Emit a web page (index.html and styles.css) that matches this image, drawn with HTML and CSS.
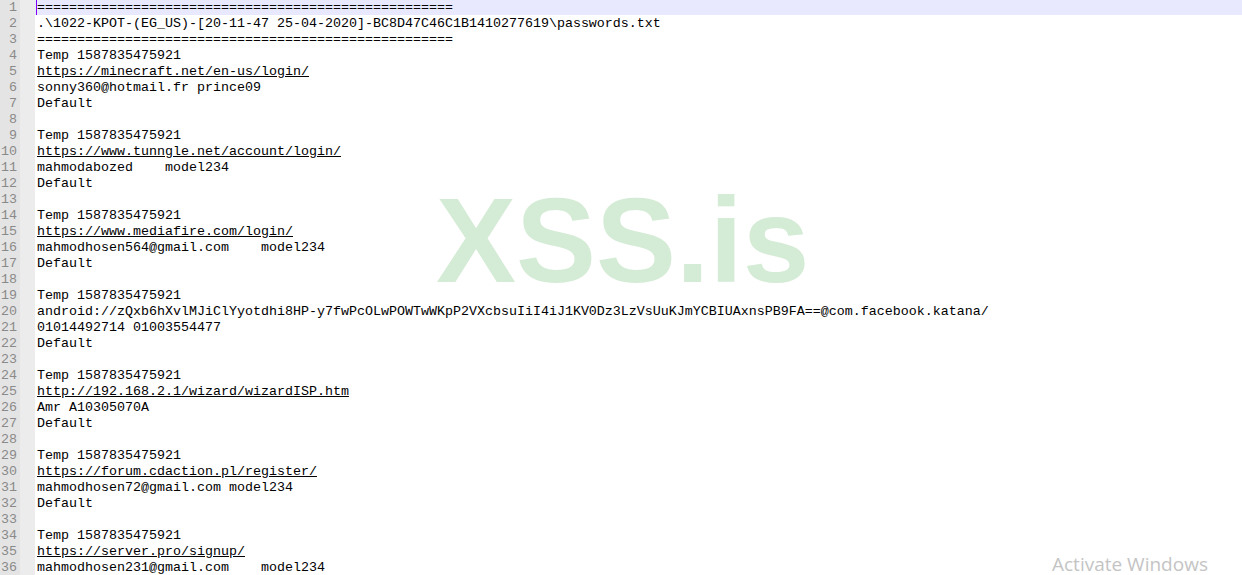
FILE: index.html
```html
<!DOCTYPE html>
<html lang="en">
<head>
    <meta charset="UTF-8">
    <title>passwords.txt</title>
    <link rel="stylesheet" href="styles.css">
</head>
<body>
    <div class="editor">
        <div class="line current"><span class="num">1</span><span class="mark"></span><span class="text">====================================================</span></div>
        <div class="line"><span class="num">2</span><span class="mark"></span><span class="text">.\1022-KPOT-(EG_US)-[20-11-47 25-04-2020]-BC8D47C46C1B1410277619\passwords.txt</span></div>
        <div class="line"><span class="num">3</span><span class="mark"></span><span class="text">====================================================</span></div>
        <div class="line"><span class="num">4</span><span class="mark"></span><span class="text">Temp 1587835475921</span></div>
        <div class="line"><span class="num">5</span><span class="mark"></span><span class="text"><span class="link">https://minecraft.net/en-us/login/</span></span></div>
        <div class="line"><span class="num">6</span><span class="mark"></span><span class="text">sonny360@hotmail.fr prince09</span></div>
        <div class="line"><span class="num">7</span><span class="mark"></span><span class="text">Default</span></div>
        <div class="line"><span class="num">8</span><span class="mark"></span><span class="text"></span></div>
        <div class="line"><span class="num">9</span><span class="mark"></span><span class="text">Temp 1587835475921</span></div>
        <div class="line"><span class="num">10</span><span class="mark"></span><span class="text"><span class="link">https://www.tunngle.net/account/login/</span></span></div>
        <div class="line"><span class="num">11</span><span class="mark"></span><span class="text">mahmodabozed    model234</span></div>
        <div class="line"><span class="num">12</span><span class="mark"></span><span class="text">Default</span></div>
        <div class="line"><span class="num">13</span><span class="mark"></span><span class="text"></span></div>
        <div class="line"><span class="num">14</span><span class="mark"></span><span class="text">Temp 1587835475921</span></div>
        <div class="line"><span class="num">15</span><span class="mark"></span><span class="text"><span class="link">https://www.mediafire.com/login/</span></span></div>
        <div class="line"><span class="num">16</span><span class="mark"></span><span class="text">mahmodhosen564@gmail.com    model234</span></div>
        <div class="line"><span class="num">17</span><span class="mark"></span><span class="text">Default</span></div>
        <div class="line"><span class="num">18</span><span class="mark"></span><span class="text"></span></div>
        <div class="line"><span class="num">19</span><span class="mark"></span><span class="text">Temp 1587835475921</span></div>
        <div class="line"><span class="num">20</span><span class="mark"></span><span class="text">android://zQxb6hXvlMJiClYyotdhi8HP-y7fwPcOLwPOWTwWKpP2VXcbsuIiI4iJ1KV0Dz3LzVsUuKJmYCBIUAxnsPB9FA==@com.facebook.katana/</span></div>
        <div class="line"><span class="num">21</span><span class="mark"></span><span class="text">01014492714 01003554477</span></div>
        <div class="line"><span class="num">22</span><span class="mark"></span><span class="text">Default</span></div>
        <div class="line"><span class="num">23</span><span class="mark"></span><span class="text"></span></div>
        <div class="line"><span class="num">24</span><span class="mark"></span><span class="text">Temp 1587835475921</span></div>
        <div class="line"><span class="num">25</span><span class="mark"></span><span class="text"><span class="link">http://192.168.2.1/wizard/wizardISP.htm</span></span></div>
        <div class="line"><span class="num">26</span><span class="mark"></span><span class="text">Amr A10305070A</span></div>
        <div class="line"><span class="num">27</span><span class="mark"></span><span class="text">Default</span></div>
        <div class="line"><span class="num">28</span><span class="mark"></span><span class="text"></span></div>
        <div class="line"><span class="num">29</span><span class="mark"></span><span class="text">Temp 1587835475921</span></div>
        <div class="line"><span class="num">30</span><span class="mark"></span><span class="text"><span class="link">https://forum.cdaction.pl/register/</span></span></div>
        <div class="line"><span class="num">31</span><span class="mark"></span><span class="text">mahmodhosen72@gmail.com model234</span></div>
        <div class="line"><span class="num">32</span><span class="mark"></span><span class="text">Default</span></div>
        <div class="line"><span class="num">33</span><span class="mark"></span><span class="text"></span></div>
        <div class="line"><span class="num">34</span><span class="mark"></span><span class="text">Temp 1587835475921</span></div>
        <div class="line"><span class="num">35</span><span class="mark"></span><span class="text"><span class="link">https://server.pro/signup/</span></span></div>
        <div class="line"><span class="num">36</span><span class="mark"></span><span class="text">mahmodhosen231@gmail.com    model234</span></div>
    </div>

    <div class="watermark">XSS.is</div>
    <div class="activate">Activate Windows</div>
</body>
</html>
```

FILE: styles.css
```css
html,body{
    margin: 0;
    padding: 0;
    background: #fff;
    overflow: hidden;
}
.editor{
    display: flex;
    flex-direction: column;
    font-family: "Liberation Mono", "Courier New", monospace;
    font-size: 13.33px;
    color: #000;
}
.line{
    display: grid;
    grid-template-columns: 20px 15px 1fr;
    height: 16px;
    line-height: 16px;
}
.num{
    background: #e4e4e4;
    color: #8a8a8a;
    text-align: right;
    padding-right: 3px;
    white-space: nowrap;
    box-sizing: border-box;
}
.mark{
    background: #ececec;
}
.text{
    padding-left: 2px;
    white-space: pre;
    position: relative;
}
.current .text{
    background: #e8e8ff;
    height: 15px;
}
.current .text::before{
    content: "";
    position: absolute;
    left: 1px;
    top: 0;
    width: 1px;
    height: 15px;
    background: #8000ff;
}
.link{
    text-decoration: underline;
}
.watermark{
    position: absolute;
    left: 436px;
    top: 180px;
    font-family: "Liberation Sans", Arial, sans-serif;
    font-weight: bold;
    font-size: 120px;
    line-height: 120px;
    color: #d4ebd5;
}
.activate{
    position: absolute;
    left: 1052px;
    top: 555px;
    font-family: "Open Sans", "Noto Sans", sans-serif;
    font-size: 19px;
    line-height: 19px;
    color: #c4c4c4;
}
```
